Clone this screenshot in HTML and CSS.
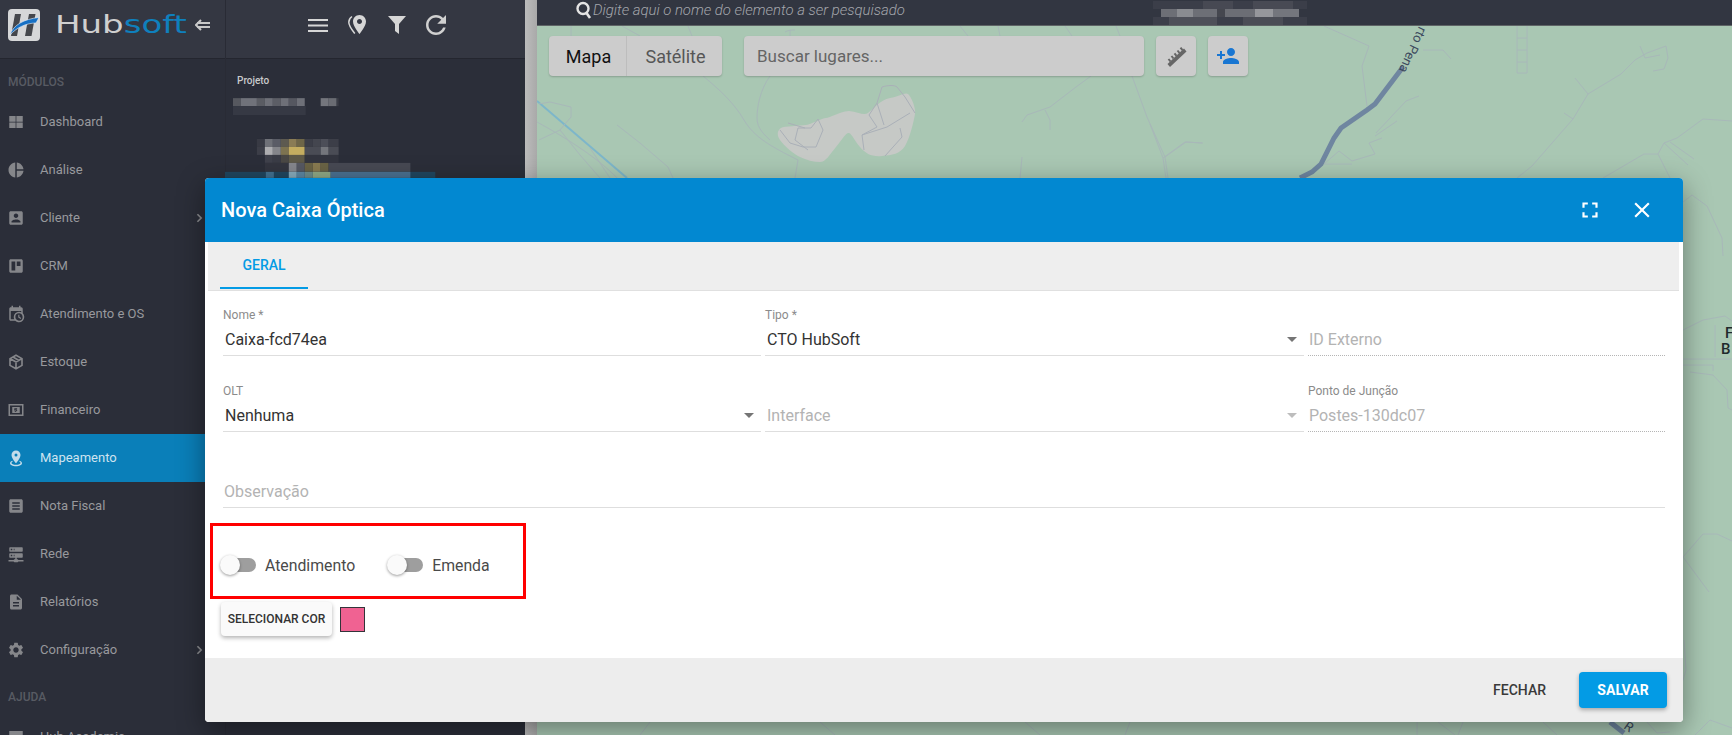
FILE: index.html
```html
<!DOCTYPE html>
<html lang="pt-BR">
<head>
<meta charset="utf-8">
<title>Nova Caixa Óptica</title>
<link rel="stylesheet" href="styles.css">
</head>
<body>
<div class="app">
  <aside class="sidebar">
    <div class="brand">
      <svg class="brand-mark" viewBox="0 0 32 32">
        <rect width="32" height="32" rx="4" fill="#d6d7d8"/>
        <path d="M7 5h6l-4 22H3z" fill="#45474c"/>
        <path d="M21 5h6.500l-4 22H17z" fill="#45474c"/>
        <path d="M2 26C5 16 16 10 31 8.500L28 14C18 14 8 19 2 26Z" fill="#1670c4" stroke="#eef2f6" stroke-width=".6"/>
      </svg>
      <span class="brand-name">Hub<span class="brand-accent">soft</span></span>
      <svg class="brand-back" viewBox="0 0 16 12"><path d="M6 1 1 6l5 5M2 4h13M2 8h13" fill="none" stroke="#c9c9c9" stroke-width="2"/></svg>
    </div>
    <nav class="nav">
      <div class="nav-title">MÓDULOS</div>
      <a class="nav-item"><svg class="nav-icon" viewBox="0 0 24 24"><path d="M3 4h8.500v7.500H3zM12.500 4H21v7.500h-8.500zM3 12.500h8.500V20H3zM12.500 12.500H21V20h-8.500z"/></svg><span>Dashboard</span></a>
      <a class="nav-item"><svg class="nav-icon" viewBox="0 0 24 24"><path d="M11 2v20c-5.070-.5-9-4.790-9-10s3.930-9.500 9-10zm2.030 0v8.990H22c-.47-4.740-4.240-8.520-8.970-8.990zm0 11.010V22c4.740-.47 8.500-4.250 8.970-8.990h-8.970z"/></svg><span>Análise</span></a>
      <a class="nav-item"><svg class="nav-icon" viewBox="0 0 24 24"><path d="M3 5v14c0 1.100.89 2 2 2h14c1.100 0 2-.9 2-2V5c0-1.100-.9-2-2-2H5c-1.110 0-2 .9-2 2zm12 4c0 1.660-1.340 3-3 3s-3-1.340-3-3 1.340-3 3-3 3 1.340 3 3zm-9 8c0-2 4-3.100 6-3.100s6 1.100 6 3.100v1H6v-1z"/></svg><span>Cliente</span><svg class="nav-chevron" viewBox="0 0 8 12"><path d="M1.500 1.500 6 6l-4.500 4.500" fill="none" stroke="#8a8b8f" stroke-width="2"/></svg></a>
      <a class="nav-item"><svg class="nav-icon" viewBox="0 0 24 24"><path d="M19 3H5c-1.100 0-2 .9-2 2v14c0 1.100.9 2 2 2h14c1.100 0 2-.9 2-2V5c0-1.100-.9-2-2-2zm-8 15H6V6h5v12zm7-6h-5V6h5v6z"/></svg><span>CRM</span></a>
      <a class="nav-item"><svg class="nav-icon" viewBox="0 0 24 24"><path d="M15 13h1.500v2.820l2.440 1.410-.75 1.300L15 16.690V13m4-5H5v11h4.670C9.240 18.090 9 17.070 9 16a7 7 0 0 1 7-7c1.070 0 2.090.24 3 .67V8M5 21c-1.110 0-2-.9-2-2V5c0-1.110.89-2 2-2h1V1h2v2h8V1h2v2h1a2 2 0 0 1 2 2v6.100c1.240 1.260 2 2.990 2 4.900a7 7 0 0 1-7 7c-1.910 0-3.640-.76-4.900-2H5m11-9.850A4.850 4.850 0 0 0 11.150 16c0 2.680 2.170 4.850 4.850 4.850A4.850 4.850 0 0 0 20.850 16c0-2.680-2.170-4.850-4.850-4.850z"/></svg><span>Atendimento e OS</span></a>
      <a class="nav-item"><svg class="nav-icon" viewBox="0 0 24 24"><path d="M12 3 20 7.500v9L12 21l-8-4.500v-9zM4.500 7.700 12 12l7.500-4.300M12 12v9M8 5.400l8 4.500" fill="none" stroke="#85868a" stroke-width="2.200"/></svg><span>Estoque</span></a>
      <a class="nav-item"><svg class="nav-icon" viewBox="0 0 24 24"><path fill-rule="evenodd" d="M2 4h20v16H2zm2 2v12h16V6zM7 8h10v8H7zm6.500 1.500h-2.600c-.9 0-1.400.6-1.400 1.300s.5 1.300 1.400 1.300h1.400v.6h-2.700v1h1.300v.8h1v-.8h.3c.9 0 1.400-.6 1.400-1.300s-.5-1.300-1.400-1.300h-1.200v-.6h2.500z"/></svg><span>Financeiro</span></a>
      <a class="nav-item nav-item-active"><svg class="nav-icon" viewBox="0 0 24 24"><path d="M12 2c3.310 0 6 2.660 6 5.950C18 12.410 12 19 12 19S6 12.410 6 7.950C6 4.660 8.690 2 12 2m0 4a2 2 0 0 0-2 2 2 2 0 0 0 2 2 2 2 0 0 0 2-2 2 2 0 0 0-2-2m8 13c0 2.210-3.580 4-8 4s-8-1.790-8-4c0-1.290 1.220-2.440 3.110-3.170l.64.910C6.670 17.190 6 17.810 6 18.500 6 19.880 8.690 21 12 21s6-1.120 6-2.500c0-.69-.67-1.310-1.750-1.760l.64-.91C18.780 16.560 20 17.710 20 19z"/></svg><span>Mapeamento</span></a>
      <a class="nav-item"><svg class="nav-icon" viewBox="0 0 24 24"><path d="M19 3H5c-1.100 0-2 .9-2 2v14c0 1.100.9 2 2 2h14c1.100 0 2-.9 2-2V5c0-1.100-.9-2-2-2zm-2 14H7v-2h10v2zm0-4H7v-2h10v2zm0-4H7V7h10v2z"/></svg><span>Nota Fiscal</span></a>
      <a class="nav-item"><svg class="nav-icon" viewBox="0 0 24 24"><path d="M13 19h1a1 1 0 0 1 1 1h7v2h-7a1 1 0 0 1-1 1h-4a1 1 0 0 1-1-1H2v-2h7a1 1 0 0 1 1-1h1v-2H4a1 1 0 0 1-1-1v-4a1 1 0 0 1 1-1h16a1 1 0 0 1 1 1v4a1 1 0 0 1-1 1h-7v2M4 3h16a1 1 0 0 1 1 1v4a1 1 0 0 1-1 1H4a1 1 0 0 1-1-1V4a1 1 0 0 1 1-1m5 4h1V5H9v2m0 8h1v-2H9v2M5 5v2h2V5H5m0 8v2h2v-2H5z"/></svg><span>Rede</span></a>
      <a class="nav-item"><svg class="nav-icon" viewBox="0 0 24 24"><path d="M14 2H6c-1.100 0-1.990.9-1.990 2L4 20c0 1.100.89 2 1.990 2H18c1.100 0 2-.9 2-2V8l-6-6zm2 16H8v-2h8v2zm0-4H8v-2h8v2zm-3-5V3.500L18.500 9H13z"/></svg><span>Relatórios</span></a>
      <a class="nav-item"><svg class="nav-icon" viewBox="0 0 24 24"><path d="M19.140 12.940c.04-.3.06-.61.06-.94 0-.32-.02-.64-.07-.94l2.030-1.580a.49.49 0 0 0 .12-.61l-1.920-3.320a.488.488 0 0 0-.59-.22l-2.390.96c-.5-.38-1.030-.7-1.620-.94l-.36-2.540a.484.484 0 0 0-.48-.41h-3.840c-.24 0-.43.17-.47.41l-.36 2.540c-.59.24-1.130.57-1.620.94l-2.390-.96c-.22-.08-.47 0-.59.22L2.740 8.870c-.12.21-.08.47.12.61l2.030 1.580c-.05.3-.09.63-.09.94s.02.64.07.94l-2.030 1.580a.49.49 0 0 0-.12.61l1.920 3.320c.12.22.37.29.59.22l2.390-.96c.5.38 1.030.7 1.620.94l.36 2.540c.05.24.24.41.48.41h3.840c.24 0 .44-.17.47-.41l.36-2.540c.59-.24 1.130-.56 1.620-.94l2.390.96c.22.08.47 0 .59-.22l1.920-3.320c.12-.22.07-.47-.12-.61l-2.010-1.580zM12 15.600c-1.980 0-3.600-1.620-3.600-3.600s1.620-3.600 3.600-3.600 3.600 1.620 3.600 3.600-1.620 3.600-3.600 3.600z"/></svg><span>Configuração</span><svg class="nav-chevron" viewBox="0 0 8 12"><path d="M1.500 1.500 6 6l-4.500 4.500" fill="none" stroke="#8a8b8f" stroke-width="2"/></svg></a>
      <div class="nav-title">AJUDA</div>
      <a class="nav-item"><svg class="nav-icon" viewBox="0 0 24 24"><path d="M3 4h18v16H3z"/></svg><span>Hub Academia</span></a>
    </nav>
  </aside>

  <section class="panel">
    <div class="panel-head">
      <svg class="tool tool-menu" viewBox="0 0 20 13"><path d="M0 1h20M0 6.500h20M0 12h20" stroke="#d6d6d6" stroke-width="2"/></svg>
      <svg class="tool tool-pin" viewBox="0 0 20 20"><path d="M11.500 0C7.900 0 5 2.900 5 6.500 5 11.300 11.500 19 11.500 19S18 11.300 18 6.500C18 2.900 15.100 0 11.500 0zm0 9c-1.400 0-2.500-1.100-2.500-2.500S10.100 4 11.500 4 14 5.100 14 6.500 12.900 9 11.500 9z" fill="#d6d6d6"/><path d="M4 1.500C1.900 3 .8 5 .8 7.200c0 3.800 4.200 9 6 11.300" fill="none" stroke="#d6d6d6" stroke-width="1.500"/></svg>
      <svg class="tool tool-filter" viewBox="0 0 18 18"><path d="M0 0h18l-7 8v10l-4-3V8z" fill="#d6d6d6"/></svg>
      <svg class="tool tool-refresh" viewBox="4 4 16 16"><path d="M17.650 6.350C16.200 4.900 14.210 4 12 4c-4.420 0-7.990 3.580-7.990 8s3.570 8 7.990 8c3.730 0 6.840-2.550 7.730-6h-2.080c-.82 2.330-3.040 4-5.650 4-3.310 0-6-2.690-6-6s2.690-6 6-6c1.660 0 3.140.69 4.220 1.780L13 11h7V4l-2.350 2.350z" fill="#d0d0d0"/></svg>
    </div>
    <div class="panel-body">
      <div class="panel-label">Projeto</div>
      <svg class="mosaic" viewBox="224 98 301 80">
        <g>
          <rect x="232" y="98" width="8" height="8" fill="#56585f"/><rect x="240" y="98" width="16" height="8" fill="#70727a"/><rect x="256" y="98" width="8" height="8" fill="#5a5c63"/><rect x="264" y="98" width="8" height="8" fill="#6e7078"/><rect x="272" y="98" width="8" height="8" fill="#5c5e66"/><rect x="280" y="98" width="8" height="8" fill="#6e7078"/><rect x="288" y="98" width="8" height="8" fill="#555760"/><rect x="296" y="98" width="8" height="8" fill="#6e7078"/><rect x="320" y="98" width="8" height="8" fill="#74767d"/><rect x="328" y="98" width="8" height="8" fill="#6a6c73"/><rect x="336" y="98" width="2" height="8" fill="#3a3c46"/>
          <rect x="232" y="106" width="73" height="9" fill="#363944"/>
          <rect x="256" y="139" width="8" height="8" fill="#383a44"/><rect x="264" y="139" width="8" height="8" fill="#6f7178"/><rect x="272" y="139" width="8" height="8" fill="#5a5c66"/><rect x="280" y="139" width="8" height="8" fill="#5d5a50"/><rect x="288" y="139" width="8" height="8" fill="#8a7c55"/><rect x="296" y="139" width="8" height="8" fill="#6e6648"/><rect x="304" y="139" width="8" height="8" fill="#3c3e48"/><rect x="312" y="139" width="8" height="8" fill="#44464f"/><rect x="320" y="139" width="8" height="8" fill="#4c4e58"/><rect x="328" y="139" width="10" height="8" fill="#3c3e48"/>
          <rect x="256" y="147" width="8" height="8" fill="#3c3e48"/><rect x="264" y="147" width="8" height="8" fill="#adadb0"/><rect x="272" y="147" width="8" height="8" fill="#84858a"/><rect x="280" y="147" width="8" height="8" fill="#7d7350"/><rect x="288" y="147" width="16" height="8" fill="#c4ad60"/><rect x="304" y="147" width="16" height="8" fill="#4a4c55"/><rect x="320" y="147" width="8" height="8" fill="#74767c"/><rect x="328" y="147" width="10" height="8" fill="#4a4c55"/>
          <rect x="264" y="155" width="8" height="8" fill="#3f414b"/><rect x="272" y="155" width="8" height="8" fill="#3a3c46"/><rect x="280" y="155" width="8" height="8" fill="#4a4845"/><rect x="288" y="155" width="16" height="8" fill="#5f5a48"/><rect x="304" y="155" width="34" height="8" fill="#33353f"/>
          <rect x="264" y="163" width="24" height="9" fill="#33353f"/><rect x="288" y="163" width="8" height="9" fill="#85868c"/><rect x="296" y="163" width="8" height="9" fill="#565862"/><rect x="304" y="163" width="8" height="9" fill="#6a6345"/><rect x="312" y="163" width="8" height="9" fill="#887a50"/><rect x="320" y="163" width="8" height="9" fill="#6a6345"/><rect x="328" y="163" width="82" height="9" fill="#474953"/>
          <rect x="224" y="172" width="211" height="6" fill="#20465f"/><rect x="265" y="172" width="8" height="6" fill="#42708f"/><rect x="288" y="172" width="8" height="6" fill="#86aabb"/><rect x="296" y="172" width="8" height="6" fill="#5c86a0"/><rect x="304" y="172" width="8" height="6" fill="#6e8c8a"/><rect x="312" y="172" width="18" height="6" fill="#8fa885"/><rect x="330" y="172" width="80" height="6" fill="#4a7090"/>
        </g>
      </svg>
    </div>
  </section>

  <div class="gutter"></div>

  <main class="workspace">
    <header class="searchbar">
      <svg class="search-icon" viewBox="0 0 18 18"><circle cx="8" cy="7.500" r="5.500" fill="none" stroke="#e4e4e4" stroke-width="2.400"/><path d="m11.500 12 3.500 5" stroke="#e4e4e4" stroke-width="2.600"/></svg>
      <span class="search-hint">Digite aqui o nome do elemento a ser pesquisado</span>
      <svg class="search-mosaic" viewBox="0 0 154 24">
        <rect width="154" height="8" fill="#3b3e49"/><rect y="16" width="154" height="8" fill="#3c3f4a"/>
        <rect x="8" y="8" width="56" height="8" fill="#6d6f76"/><rect x="24" y="8" width="16" height="8" fill="#8a8c91"/><rect x="64" y="8" width="8" height="8" fill="#45474f"/><rect x="72" y="8" width="30" height="8" fill="#6c6e75"/><rect x="102" y="8" width="18" height="8" fill="#96979c"/><rect x="120" y="8" width="26" height="8" fill="#74767d"/>
        <rect x="16" y="16" width="48" height="8" fill="#4e5059"/><rect x="90" y="16" width="40" height="8" fill="#4b4d56"/>
        <rect x="50" y="0" width="30" height="8" fill="#474953"/><rect x="100" y="0" width="40" height="8" fill="#484a54"/>
      </svg>
    </header>
    <div class="map">
      <svg class="map-lines" viewBox="537 26 1195 709">
        <path class="area" d="M849 111C858 112 864 116 868 113S880 100 890 98 905 92 908 94 916 108 915 114 910 138 905 146 892 155 882 156 866 154 860 147 852 134 849 133 842 140 836 147 826 162 820 162 806 160 800 157 784 146 780 140 778 130 781 128 800 126 806 125 822 118 826 118 838 112 849 111Z"/>
        <path class="river" d="M537 101 627 178"/>
        <g class="thin">
          <path d="M537 122C570 140 600 160 617 178M703 76C720 90 734 103 744 120S770 146 798 160L795 178M770 76C760 90 757 107 757 118S765 135 770 140"/>
          <path d="M1091 76 1076 87 1050 107 1027 115 1022 122M1045 110 1050 120 1050 130M1132 76 1147 117 1165 157 1168 178M1165 157 1186 142 1203 143M617 125 640 143 668 167 673 178M1020 178 1022 157"/>
          <path d="M571 26V36M622 26 640 36M688 26 692 36M785 32C788 30 792 30 795 30M790 30V36M960 26 968 36M998 26 1000 36M1065 26 1072 36M1116 26 1120 36"/>
          <path d="M539 140 560 130 571 117 571 107 550 102 539 104M560 130 580 155 600 178M590 148 610 178"/>
          <path class="soft" d="M882 87C888 85 895 85 897 87L905 97 915 113M882 87 877 103 869 115 877 127 862 135 864 150M910 113 887 127 862 135M900 128 902 137 885 156M780 130 790 143 803 147 816 147 823 130 818 119 811 128 798 128 795 140 808 150M788 123 805 128M877 103 884 125"/>
          <path d="M1324 26 1369 46 1362 66 1367 106M1423 50H1443L1451 59M1517 26V73H1527V26M1517 38H1527M1517 50H1527M1517 62H1527"/>
          <path d="M1575 78 1588 94 1621 74 1635 60 1647 53 1666 46 1668 58 1664 69 1653 71M1640 46 1645 58 1660 55M1588 94 1573 119 1532 166 1517 178M1564 113 1573 119M1732 121 1703 119 1677 138 1664 143 1658 154 1644 154 1603 178M1658 154 1670 178M1670 142 1694 159M1664 143 1688 165"/>
          <path d="M1419 96 1406 101 1376 133M1397 121 1375 136M1382 138 1369 143 1375 154 1352 161 1339 151 1324 164H1352M1150 124 1163 158 1185 142 1202 143M1163 158 1166 178"/>
          <path d="M1683 202 1692 195 1707 206 1722 238 1723 256M1683 330 1703 320 1725 316 1732 321M1715 325V357M1683 359H1732M1683 365H1713V371M1690 372 1713 375 1727 390 1728 408 1732 410M1683 557 1703 534 1717 534 1732 541M1683 557 1709 592"/>
          <path d="M1417 722V735M1438 722 1455 735M1463 722 1458 735M1543 722 1557 735M1647 722 1657 733 1670 732M1695 735 1710 720 1732 728M1684 640 1686 670 1680 690"/>
          <path d="M1025 722 1040 735M1130 722 1125 735M820 722 835 735M650 722 640 735"/>
        </g>
        <path class="road" d="M1403 67 1375 104 1367 110 1341 128 1334 138 1321 164 1312 172 1300 178"/>
        <path class="road" d="M1610 722 1624 733"/>
        <text class="road-name" transform="translate(1419 26) rotate(115)">rto Pena</text>
        <text class="road-name" transform="translate(1623 728) rotate(35)">R</text>
        <text class="place-name" x="1725" y="338">F</text>
        <text class="place-name" x="1721" y="354">B</text>
      </svg>
      <div class="map-tools">
        <div class="map-type"><button class="map-type-btn map-type-active">Mapa</button><button class="map-type-btn">Satélite</button></div>
        <div class="map-search">Buscar lugares...</div>
        <button class="map-btn"><svg class="map-btn-icon" viewBox="0 0 24 24"><path d="M3.500 20 20 4.500l2.500 3L6 23z" fill="#666"/><path d="M6.500 17.500 4.500 15M9.500 14.500l-2-2.500M12.500 11.800l-2-2.500M15.500 9l-2-2.500M18.500 6.200l-2-2.500" stroke="#666" stroke-width="2"/></svg></button>
        <button class="map-btn"><svg class="map-btn-icon" viewBox="0 0 24 24"><path d="M15 12c2.210 0 4-1.790 4-4s-1.790-4-4-4-4 1.790-4 4 1.790 4 4 4zm-9-2V7H4v3H1v2h3v3h2v-3h3v-2H6zm9 4c-2.670 0-8 1.340-8 4v2h16v-2c0-2.660-5.330-4-8-4z" fill="#1976d2"/></svg></button>
      </div>
    </div>
  </main>
</div>

<div class="dialog">
  <header class="dialog-head">
    <h1 class="dialog-title">Nova Caixa Óptica</h1>
    <svg class="dialog-action" viewBox="0 0 24 24"><path d="M7 14H5v5h5v-2H7v-3zm-2-4h2V7h3V5H5v5zm12 7h-3v2h5v-5h-2v3zM14 5v2h3v3h2V5h-5z" fill="#fff"/></svg>
    <svg class="dialog-action" viewBox="0 0 24 24"><path d="M19 6.410 17.590 5 12 10.590 6.410 5 5 6.410 10.590 12 5 17.590 6.410 19 12 13.410 17.590 19 19 17.590 13.410 12z" fill="#fff"/></svg>
  </header>
  <div class="tabs"><div class="tab">GERAL</div></div>
  <form class="form">
    <div class="fields">
      <div class="field"><label class="field-label">Nome *</label><div class="field-input">Caixa-fcd74ea</div></div>
      <div class="field"><label class="field-label">Tipo *</label><div class="field-input">CTO HubSoft<i class="caret"></i></div></div>
      <div class="field"><label class="field-label"></label><div class="field-input field-off">ID Externo</div></div>
      <div class="field"><label class="field-label">OLT</label><div class="field-input">Nenhuma<i class="caret"></i></div></div>
      <div class="field"><label class="field-label"></label><div class="field-input field-solid">Interface<i class="caret caret-off"></i></div></div>
      <div class="field"><label class="field-label">Ponto de Junção</label><div class="field-input field-off">Postes-130dc07</div></div>
      <div class="field field-wide"><label class="field-label"></label><div class="field-input field-solid field-note">Observação</div></div>
    </div>
    <div class="toggles">
      <label class="toggle"><span class="switch"><span class="switch-thumb"></span></span>Atendimento</label>
      <label class="toggle"><span class="switch"><span class="switch-thumb"></span></span>Emenda</label>
    </div>
    <div class="color-row">
      <button type="button" class="color-btn">SELECIONAR COR</button>
      <span class="swatch"></span>
    </div>
  </form>
  <footer class="dialog-foot">
    <button class="btn-plain">FECHAR</button>
    <button class="btn-save">SALVAR</button>
  </footer>
  <div class="callout"></div>
</div>
</body>
</html>
```

FILE: styles.css
```css
* { box-sizing: border-box; }
html, body { margin: 0; padding: 0; height: 735px; overflow: hidden; }
body { font-family: Roboto, "Liberation Sans", sans-serif; position: relative; background: #2b2e39; }
svg { display: block; flex: none; }
button { font-family: inherit; border: 0; padding: 0; cursor: pointer; }

.app { display: flex; width: 1732px; height: 735px; }

/* sidebar */
.sidebar { width: 225px; flex: none; background: #2b2e39; overflow: hidden; }
.brand { height: 59px; display: flex; align-items: center; padding: 0 0 8px 8px; background: #343742; border-bottom: 1px solid #24262f; }
.brand-mark { width: 32px; height: 32px; }
.brand-name { display: inline-block; width: 131px; margin-left: 15px; font-size: 25px; font-weight: 400; line-height: 32px; color: #cfcfcf; font-family: "DejaVu Sans", sans-serif; transform: scaleX(1.36); transform-origin: left center; white-space: nowrap; }
.brand-accent { color: #0f80bd; }
.brand-back { width: 16px; height: 12px; margin-left: 9px; }
.nav-title { height: 39px; padding: 16px 0 0 8px; font-size: 12px; line-height: 14px; font-weight: 500; color: #585b63; }
.nav-item { display: flex; align-items: center; height: 48px; padding: 0 0 2px 7px; font-size: 13px; font-weight: 400; color: #98999d; }
.nav-icon { width: 18px; height: 18px; margin: 2px 15px 0 0; fill: #85868a; }
.nav-chevron { width: 7px; height: 10px; margin: 2px 22px 0 auto; }
.nav-item-active { background: #0a7fb9; color: #cfe4f0; }
.nav-item-active .nav-icon { fill: #c3dcea; }

/* secondary panel */
.panel { width: 300px; flex: none; background: #2b2e39; border-left: 1px solid #292b35; }
.panel-head { height: 59px; display: flex; align-items: center; gap: 20px; padding: 0 0 8px 82px; background: #343742; border-bottom: 1px solid #24262f; }
.tool-menu { width: 20px; height: 13px; }
.tool-pin { width: 20px; height: 20px; }
.tool-filter { width: 18px; height: 18px; }
.tool-refresh { width: 20px; height: 20px; }
.panel-body { padding-top: 16px; }
.panel-label { padding-left: 11px; font-size: 10px; line-height: 12px; font-weight: 500; color: #c9cacc; }
.mosaic { width: 300px; height: 80px; margin: 11px 0 0 -1px; }

.gutter { width: 12px; flex: none; background: linear-gradient(90deg, #bcbcbc, #a9a9a9); }

/* map */
.workspace { flex: 1; display: flex; flex-direction: column; min-width: 0; }
.searchbar { height: 26px; flex: none; display: flex; align-items: center; padding: 0 0 6px 38px; background: #323641; border-bottom: 1px solid #5f6466; }
.search-icon { width: 18px; height: 18px; }
.search-hint { font-size: 14.900px; font-weight: 300; font-style: italic; color: #a4a6ac; white-space: nowrap; }
.search-mosaic { width: 154px; height: 24px; margin-left: 248px; margin-top: 6px; }
.map { position: relative; flex: 1; background: #a9c7b3; overflow: hidden; }
.map-lines { position: absolute; left: 0; top: 0; width: 1195px; height: 709px; }
.area { fill: #c6c9c6; }
.river { fill: none; stroke: #7db6ca; stroke-width: 2; }
.thin path { fill: none; stroke: #a8b8b9; stroke-width: 1; }
.thin path.soft { stroke: #aab0b8; }
.road { fill: none; stroke: #6f86a0; stroke-width: 5; }
.road-name { font-size: 13px; fill: #3c4a5e; }
.place-name { font-size: 15px; font-weight: 500; fill: #1f2a2c; }

.map-tools { position: relative; display: flex; padding: 10px 0 0 12px; }
.map-type { display: flex; height: 40px; width: 173px; background: #cccccc; border-radius: 4px; box-shadow: 0 1px 2px rgba(0,0,0,.2); }
.map-type-btn { flex: none; width: 95px; height: 40px; padding-left: 2px; background: transparent; font-size: 18px; color: #565656; border-radius: 0 4px 4px 0; }
.map-type-btn.map-type-active { width: 78px; color: #111; border-right: 1px solid #bdbdbd; border-radius: 4px 0 0 4px; }
.map-search { width: 400px; height: 40px; margin-left: 22px; padding-left: 13px; background: #cccccc; border-radius: 4px; box-shadow: 0 1px 2px rgba(0,0,0,.2); font-size: 17px; line-height: 40px; color: #656565; }
.map-btn { width: 40px; height: 40px; margin-left: 12px; background: #cccccc; border-radius: 4px; box-shadow: 0 1px 2px rgba(0,0,0,.2); display: flex; align-items: center; justify-content: center; }
.map-btn-icon { width: 24px; height: 24px; }

/* dialog */
.dialog { position: absolute; left: 205px; top: 178px; width: 1478px; height: 544px; display: flex; flex-direction: column; background: #fff; border-radius: 4px; box-shadow: 0 8px 28px rgba(0,0,0,.4); }
.dialog-head { height: 64px; flex: none; display: flex; align-items: center; padding: 0 28px 0 16px; background: #0288d1; border-radius: 4px 4px 0 0; }
.dialog-title { flex: 1; margin: 0; font-size: 20px; font-weight: 500; color: #fff; }
.dialog-action { width: 26px; height: 26px; margin-left: 26px; }
.tabs { height: 49px; flex: none; margin: 0 4px 0 3px; padding-left: 12px; background: #eeeeee; border-bottom: 1px solid #e0e0e0; }
.tab { width: 88px; height: 47px; font-size: 14px; font-weight: 500; line-height: 46px; text-align: center; color: #039be5; border-bottom: 2px solid #039be5; }
.form { flex: 1; padding: 17px 0 0 18px; }
.fields { display: grid; grid-template-columns: 538px 539px 357px; column-gap: 4px; row-gap: 28px; }
.field-wide { grid-column: 1 / -1; }
.field-label { display: block; height: 14px; font-size: 12px; line-height: 14px; font-weight: 400; color: #8b8b8b; }
.field-input { display: flex; align-items: center; justify-content: space-between; height: 34px; padding: 2px 7px 0 2px; font-size: 16px; color: #333; border-bottom: 1px solid #dedede; }
.field-off { padding-left: 1px; color: #b3b3b3; border-bottom: 1px dotted #b5b5b5; }
.field-solid { color: #b3b3b3; }
.field-note { padding-left: 1px; }
.caret { width: 0; height: 0; border-left: 5px solid transparent; border-right: 5px solid transparent; border-top: 5px solid #757575; }
.caret-off { border-top-color: #bdbdbd; }
.toggles { display: flex; gap: 33px; height: 34px; margin: 40px 0 0 -2px; }
.toggle { display: flex; align-items: center; font-size: 15.800px; color: #4a4a4a; }
.switch { position: relative; display: block; width: 35px; height: 14px; margin-right: 9px; background: #9e9e9e; border-radius: 7px; }
.switch-thumb { position: absolute; left: -1px; top: -3px; width: 20px; height: 20px; background: #fafafa; border-radius: 50%; box-shadow: 0 1px 3px rgba(0,0,0,.4); }
.color-row { display: flex; align-items: center; margin: 20px 0 0 -2px; }
.color-btn { width: 111px; height: 34px; background: #fafafa; border-radius: 4px; box-shadow: 0 2px 4px rgba(0,0,0,.3); font-size: 12px; font-weight: 500; color: #333; }
.swatch { width: 25px; height: 25px; margin-left: 8px; background: #f06292; border: 1px solid #33343a; }
.dialog-foot { height: 64px; flex: none; display: flex; align-items: center; justify-content: flex-end; padding-right: 16px; background: #ededed; border-radius: 0 0 4px 4px; }
.btn-plain { background: transparent; margin-right: 33px; font-size: 14px; font-weight: 500; color: #3a3a3a; }
.btn-save { width: 88px; height: 36px; background: #039be5; border-radius: 4px; box-shadow: 0 2px 4px rgba(0,0,0,.3); font-size: 14px; font-weight: 700; color: #fff; }
.callout { position: absolute; left: 5px; top: 345px; width: 316px; height: 76px; border: 3px solid #ff0000; pointer-events: none; }
```
